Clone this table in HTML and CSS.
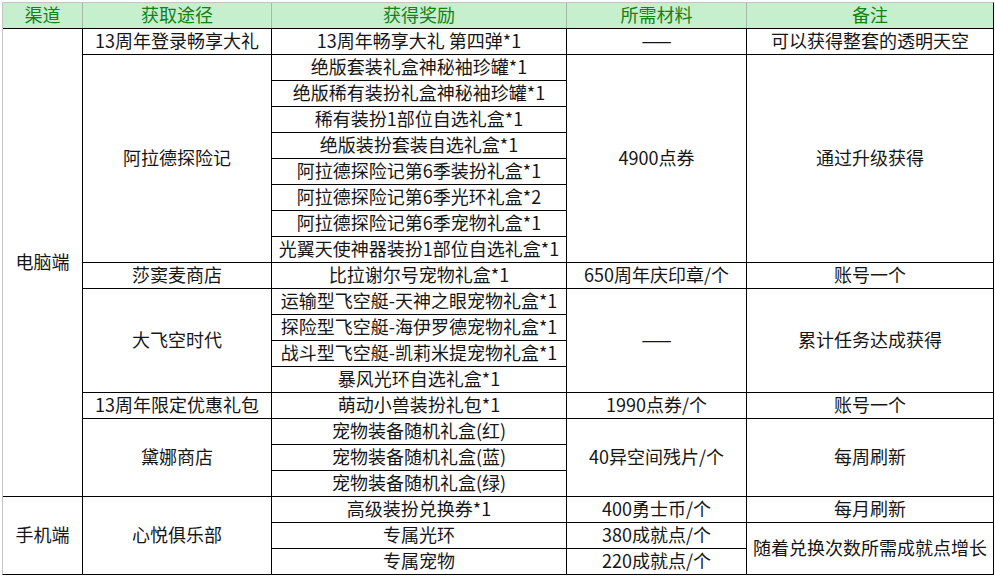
FILE: index.html
```html
<!DOCTYPE html>
<html lang="zh-CN">
<head>
<meta charset="utf-8">
<title>13周年奖励</title>
<link rel="stylesheet" href="styles.css">
</head>
<body>
<div class="sheet">
  <div class="head">
    <div class="hc">渠道</div>
    <div class="hc">获取途径</div>
    <div class="hc">获得奖励</div>
    <div class="hc">所需材料</div>
    <div class="hc">备注</div>
  </div>

  <div class="c rs18">电脑端</div>
  <div class="c">13周年登录畅享大礼</div>
  <div class="c">13周年畅享大礼 第四弹*1</div>
  <div class="c">——</div>
  <div class="c">可以获得整套的透明天空</div>

  <div class="c rs8">阿拉德探险记</div>
  <div class="c">绝版套装礼盒神秘袖珍罐*1</div>
  <div class="c rs8">4900点券</div>
  <div class="c rs8">通过升级获得</div>
  <div class="c">绝版稀有装扮礼盒神秘袖珍罐*1</div>
  <div class="c">稀有装扮1部位自选礼盒*1</div>
  <div class="c">绝版装扮套装自选礼盒*1</div>
  <div class="c">阿拉德探险记第6季装扮礼盒*1</div>
  <div class="c">阿拉德探险记第6季光环礼盒*2</div>
  <div class="c">阿拉德探险记第6季宠物礼盒*1</div>
  <div class="c">光翼天使神器装扮1部位自选礼盒*1</div>

  <div class="c">莎窦麦商店</div>
  <div class="c">比拉谢尔号宠物礼盒*1</div>
  <div class="c">650周年庆印章/个</div>
  <div class="c">账号一个</div>

  <div class="c rs4">大飞空时代</div>
  <div class="c">运输型飞空艇-天神之眼宠物礼盒*1</div>
  <div class="c rs4">——</div>
  <div class="c rs4">累计任务达成获得</div>
  <div class="c">探险型飞空艇-海伊罗德宠物礼盒*1</div>
  <div class="c">战斗型飞空艇-凯莉米提宠物礼盒*1</div>
  <div class="c">暴风光环自选礼盒*1</div>

  <div class="c">13周年限定优惠礼包</div>
  <div class="c">萌动小兽装扮礼包*1</div>
  <div class="c">1990点券/个</div>
  <div class="c">账号一个</div>

  <div class="c rs3">黛娜商店</div>
  <div class="c">宠物装备随机礼盒(红)</div>
  <div class="c rs3">40异空间残片/个</div>
  <div class="c rs3">每周刷新</div>
  <div class="c">宠物装备随机礼盒(蓝)</div>
  <div class="c">宠物装备随机礼盒(绿)</div>

  <div class="c rs3">手机端</div>
  <div class="c rs3">心悦俱乐部</div>
  <div class="c">高级装扮兑换券*1</div>
  <div class="c">400勇士币/个</div>
  <div class="c">每月刷新</div>
  <div class="c">专属光环</div>
  <div class="c">380成就点/个</div>
  <div class="c rs2">随着兑换次数所需成就点增长</div>
  <div class="c">专属宠物</div>
  <div class="c">220成就点/个</div>
</div>
</body>
</html>
```

FILE: styles.css
```css
html, body {
  margin: 0;
  padding: 0;
  background: #ffffff;
}

body {
  padding: 2px 0 0 2px;
  font-family: "Noto Sans CJK SC", "Noto Sans", sans-serif;
  font-size: 18px;
  color: #161616;
}

.sheet {
  width: max-content;
  display: grid;
  grid-template-columns: 79px 188px 294px 179px 246px;
  grid-auto-rows: 25px;
  gap: 1px;
  background: #000000;
  border-left: 1px solid #c4c4c4;
  border-top: 1px solid #c4c4c4;
  border-right: 1px solid #000000;
  border-bottom: 1px solid #000000;
}

.head {
  grid-column: 1 / -1;
  display: grid;
  grid-template-columns: 79px 188px 294px 179px 246px;
  gap: 1px;
  background: #a8b8a8;
}

.hc {
  background: #c6efce;
  color: #158215;
  display: flex;
  align-items: center;
  justify-content: center;
  line-height: 1;
  white-space: nowrap;
  padding-bottom: 3px;
}

.c {
  background: #ffffff;
  display: flex;
  align-items: center;
  justify-content: center;
  line-height: 1;
  white-space: nowrap;
  padding-bottom: 3px;
}

.rs2 { grid-row: span 2; }
.rs3 { grid-row: span 3; }
.rs4 { grid-row: span 4; }
.rs8 { grid-row: span 8; }
.rs18 { grid-row: span 18; }
```
